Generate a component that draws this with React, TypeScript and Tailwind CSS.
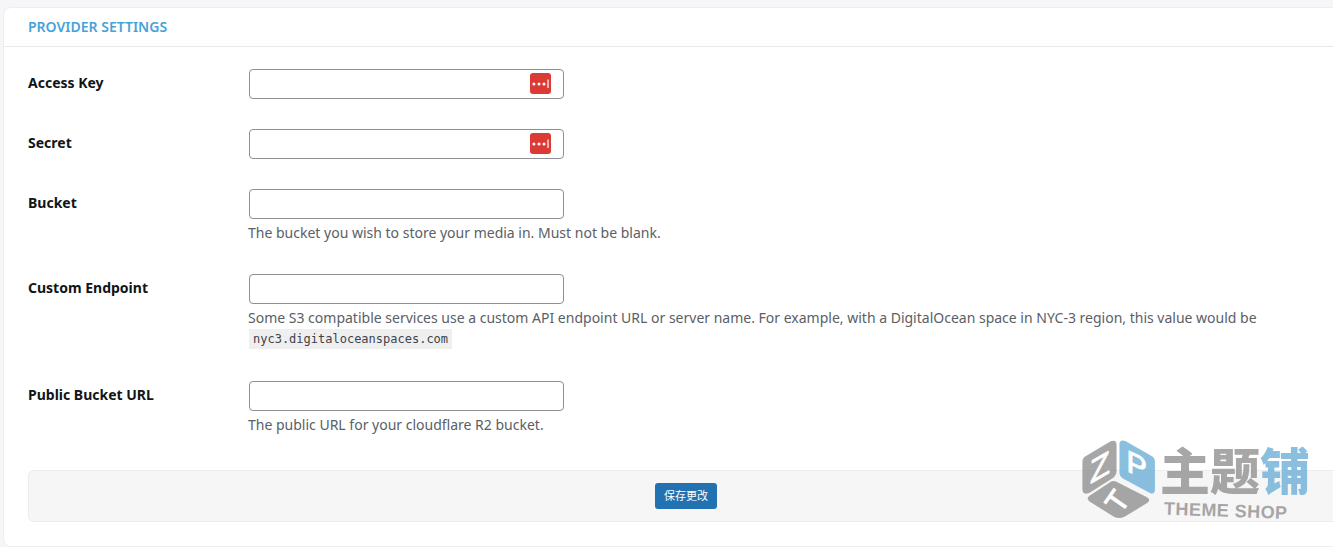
import type { ReactNode } from "react";
import { clsx } from "clsx";

type Field = {
  id: string;
  label: string;
  type?: "text" | "password";
  keyBadge?: boolean;
  help?: ReactNode;
};

const fields: Field[] = [
  { id: "access-key", label: "Access Key", keyBadge: true },
  { id: "secret", label: "Secret", type: "password", keyBadge: true },
  {
    id: "bucket",
    label: "Bucket",
    help: "The bucket you wish to store your media in. Must not be blank.",
  },
  {
    id: "endpoint",
    label: "Custom Endpoint",
    help: (
      <>
        Some S3 compatible services use a custom API endpoint URL or server name. For example, with a
        DigitalOcean space in NYC-3 region, this value would be{" "}
        <code className="mx-px inline-block bg-[#efeff0] px-1 align-top font-['DejaVu_Sans_Mono',monospace] text-[12px] leading-5 text-[#3c434a]">
          nyc3.digitaloceanspaces.com
        </code>
      </>
    ),
  },
  {
    id: "public-url",
    label: "Public Bucket URL",
    help: "The public URL for your cloudflare R2 bucket.",
  },
];

function KeyBadge() {
  return (
    <svg viewBox="0 0 21 21" className="pointer-events-none absolute top-1 right-[13px] size-[21px]" aria-hidden="true">
      <rect width="21" height="21" rx="3" fill="#dc3a35" />
      <circle cx="3.9" cy="11" r="1.5" fill="#fff" />
      <circle cx="9" cy="11" r="1.5" fill="#fff" />
      <circle cx="14" cy="11" r="1.5" fill="#fff" />
      <path d="M18 6.5v8.5" stroke="#fff" strokeWidth="1.2" />
    </svg>
  );
}

function FieldRow({ field }: { field: Field }) {
  return (
    <div className="flex">
      <label htmlFor={field.id} className="w-[220px] shrink-0 pt-1 text-[14px] leading-5 font-bold text-[#101517]">
        {field.label}
      </label>
      <div className="min-w-0 flex-1">
        <div className="relative mx-px w-[315px]">
          <input
            id={field.id}
            type={field.type ?? "text"}
            className={clsx(
              "block h-[30px] w-full rounded-[4px] border border-[#8c8f94] bg-white px-2 text-[14px] text-[#2c3338]",
              field.keyBadge && "pr-10"
            )}
          />
          {field.keyBadge && <KeyBadge />}
        </div>
        {field.help && <p className="mt-[3px] text-[14px] leading-[22px] text-[#5a6066]">{field.help}</p>}
      </div>
    </div>
  );
}

function Watermark() {
  return (
    <div className="pointer-events-none absolute right-[23px] bottom-[26px] flex gap-1 opacity-80">
      <svg viewBox="0 0 228 246" className="h-[80px] w-[75px] shrink-0 overflow-visible" aria-hidden="true">
        <path d="M14 52 90 7q18-7 18 12v78q0 14-10 22l-74 47q-21 8-21-12V70q0-12 11-18Z" fill="#929292" />
        <path d="m135 6 81 46q10 6 10 18v84q0 20-17 11l-80-43q-12-7-12-20V16q0-16 18-10Z" fill="#6db0d8" />
        <path d="m106 131 94 47q16 8 2 19l-68 41q-18 9-34 1l-74-46q-14-10 0-19l62-41q9-6 18-2Z" fill="#929292" />
        <g fill="#fff" stroke="#fff" strokeWidth="3" fontFamily="Liberation Sans, sans-serif" textAnchor="middle">
          <text fontSize="100" transform="translate(57 121) skewY(-30)">Z</text>
          <text fontSize="94" transform="translate(170 112) skewY(25)">P</text>
          <text fontSize="92" transform="translate(136 210) rotate(-55)">T</text>
        </g>
      </svg>
      <div className="flex flex-col pt-1.5 font-['Liberation_Sans','Noto_Sans_CJK_SC',sans-serif]">
        <div className="flex h-[56px] items-center text-[50px] leading-none font-black text-[#929292]">
          <span>主</span>
          <span>题</span>
          <span className="text-[#6db0d8]">铺</span>
        </div>
        <span className="rotate-2 pl-1 text-[18px] leading-5 font-bold tracking-wide text-[#929292]">
          THEME SHOP
        </span>
      </div>
    </div>
  );
}

export default function App() {
  return (
    <div className="relative min-h-screen overflow-hidden bg-[#f6f6f9] pt-[7px] pl-[3px] font-['Noto_Sans','Noto_Sans_CJK_SC',sans-serif]">
      <form
        onSubmit={(e) => e.preventDefault()}
        className="-mr-9 rounded-[8px] border border-[#eeeef0] bg-white"
      >
        <h2 className="border-b border-[#e9e9eb] px-6 py-[9px] text-[14px] leading-5 font-semibold text-[#46a3d9] uppercase">
          Provider Settings
        </h2>
        <div className="px-6 pt-[22px] pb-6">
          <div className="flex flex-col gap-[30px]">
            {fields.map((field) => (
              <FieldRow key={field.id} field={field} />
            ))}
          </div>
          <div className="mt-[34px] flex justify-center rounded-[6px] border border-[#ececee] bg-[#f6f6f7] py-3">
            <button
              type="submit"
              className="h-[26px] rounded-[3px] bg-[#2271b1] px-[9px] text-[11px] leading-[26px] text-white"
            >
              保存更改
            </button>
          </div>
        </div>
      </form>
      <Watermark />
    </div>
  );
}
